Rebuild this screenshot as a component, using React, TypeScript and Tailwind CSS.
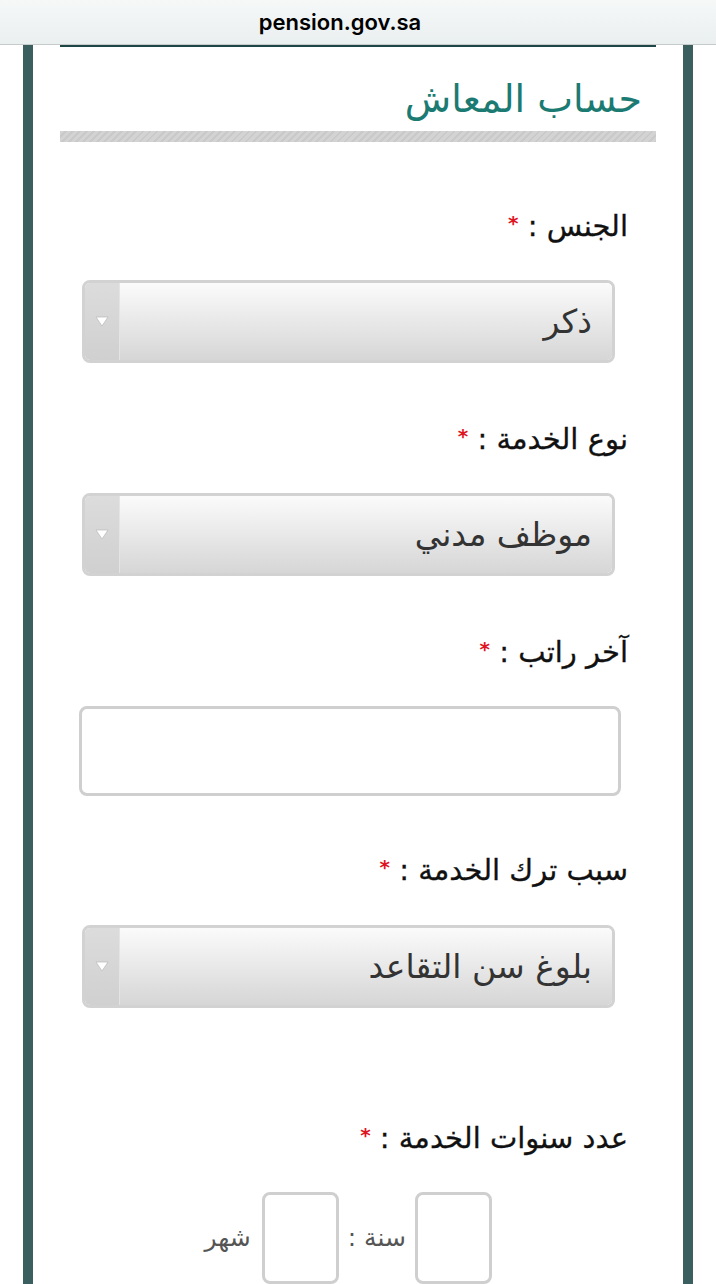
const arabic = { fontFamily: '"DejaVu Sans", "Noto Sans", sans-serif' };

const Label = ({ text, className }: { text: string; className: string }) => (
  <div className={`pr-[28px] text-[29px] leading-[30px] text-[#111] [-webkit-text-stroke:0.3px_#111] ${className}`}>
    {text} <span className="relative -top-[6px] text-[20px] font-bold text-[#e0141e] [-webkit-text-stroke:0px]">*</span>
  </div>
);

const Select = ({ value, className }: { value: string; className: string }) => (
  <div
    className={`mr-[41px] flex h-[86px] w-[533px] items-stretch overflow-hidden rounded-[8px] border-[3px] border-[#d2d2d2] ${className}`}
  >
    <div className="flex flex-1 items-center bg-gradient-to-b from-[#fbfbfb] to-[#d6d6d6] pr-[20px] text-[33px] text-[#333]">
      {value}
    </div>
    <div className="flex w-[35px] items-center justify-center border-r border-[#e4e4e4] bg-gradient-to-b from-[#dcdcdc] to-[#d0d0d0]">
      <svg width="14" height="11" viewBox="0 0 14 11">
        <path d="M1 1 L13 1 L7 10 Z" fill="#fff" stroke="#b8b8b8" strokeWidth="0.7" />
      </svg>
    </div>
  </div>
);

const App = () => {
  return (
    <div className="relative h-[1284px] w-[716px] overflow-hidden bg-white">
      {/* Browser address bar */}
      <div className="flex h-[45px] items-center justify-center border-b border-[#c8cbcc] bg-gradient-to-b from-[#f6f8f8] to-[#eaeff0]">
        <span className="pr-[36px] text-[22px] font-semibold text-black" style={{ fontFamily: 'Inter, "Liberation Sans", sans-serif' }}>
          pension.gov.sa
        </span>
      </div>

      <div className="flex h-[1239px] pl-[23px] pr-[23px]" style={arabic}>
        <div className="w-[10px] bg-[#3b5f5e]" />

        <main dir="rtl" className="flex flex-1 flex-col px-[27px]">
          <div className="h-[2px] bg-[#1d4646]" />

          <h1 className="mt-[32px] pr-[14px] text-[38px] leading-[40px] text-[#1b7b72]">حساب المعاش</h1>

          <div className="mt-[12px] h-[12px] bg-[repeating-linear-gradient(135deg,#d3d3d3_0px,#d3d3d3_3px,#c9c9c9_3px,#c9c9c9_5px)]" />

          <Label text="الجنس :" className="mt-[69px]" />
          <Select value="ذكر" className="mt-[36px]" />

          <Label text="نوع الخدمة :" className="mt-[61px]" />
          <Select value="موظف مدني" className="mt-[36px]" />

          <Label text="آخر راتب :" className="mt-[61px]" />
          <div className="mr-[35px] mt-[36px] h-[93px] w-[542px] rounded-[8px] border-[3px] border-[#cfcfcf] bg-white" />

          <Label text="سبب ترك الخدمة :" className="mt-[59px]" />
          <Select value="بلوغ سن التقاعد" className="mt-[37px]" />

          <Label text="عدد سنوات الخدمة :" className="mt-[115px]" />
          <div className="mr-[164px] mt-[36px] flex items-center gap-[9px] text-[25px] text-[#555]">
            <div className="h-[92px] w-[77px] rounded-[8px] border-[3px] border-[#cfcfcf] bg-white" />
            <span>سنة :</span>
            <div className="h-[92px] w-[77px] rounded-[8px] border-[3px] border-[#cfcfcf] bg-white" />
            <span className="mr-[2px]">شهر</span>
          </div>
        </main>

        <div className="w-[10px] bg-[#3b5f5e]" />
      </div>
    </div>
  );
};

export default App;
